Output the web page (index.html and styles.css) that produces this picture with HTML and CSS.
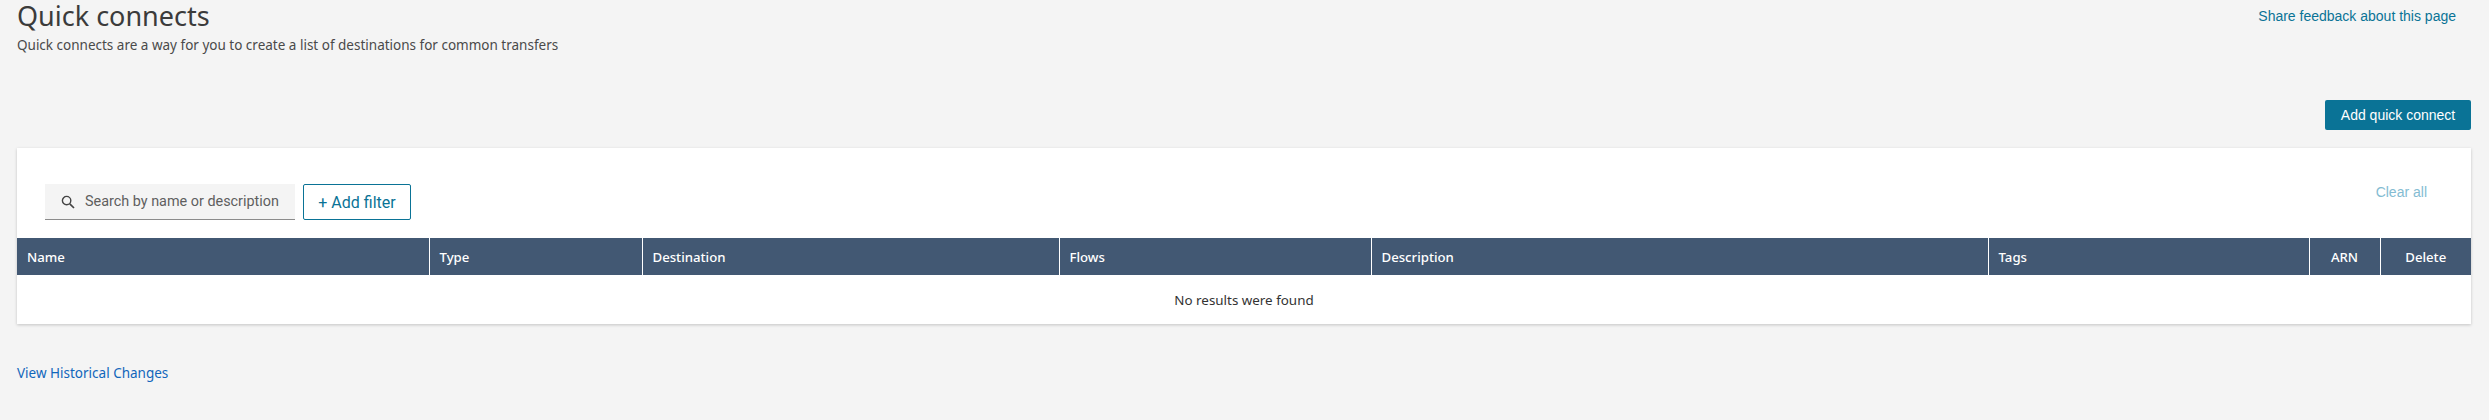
FILE: index.html
```html
<!DOCTYPE html>
<html lang="en">
<head>
    <meta charset="UTF-8">
    <title>Quick connects</title>
    <link rel="stylesheet" href="styles.css">
</head>
<body>
    <div class="page-head">
        <div>
            <h1>Quick connects</h1>
            <p class="subtitle">Quick connects are a way for you to create a list of destinations for common transfers</p>
        </div>
        <a class="feedback" href="#">Share feedback about this page</a>
    </div>

    <div class="actions">
        <button class="primary">Add quick connect</button>
    </div>

    <div class="card">
        <div class="toolbar">
            <div class="search">
                <svg class="search-icon" viewBox="0 0 14 14" width="14" height="14">
                    <circle cx="5.6" cy="5.6" r="4.2" fill="none" stroke="#444" stroke-width="1.4"/>
                    <line x1="8.8" y1="8.8" x2="13" y2="13" stroke="#444" stroke-width="1.7"/>
                </svg>
                <span>Search by name or description</span>
            </div>
            <button class="add-filter">+ Add filter</button>
            <a class="clear-all" href="#">Clear all</a>
        </div>
        <table>
            <colgroup>
                <col class="col-name">
                <col class="col-type">
                <col class="col-destination">
                <col class="col-flows">
                <col class="col-description">
                <col class="col-tags">
                <col class="col-arn">
                <col class="col-delete">
            </colgroup>
            <thead>
                <tr>
                    <th>Name</th>
                    <th>Type</th>
                    <th>Destination</th>
                    <th>Flows</th>
                    <th>Description</th>
                    <th>Tags</th>
                    <th class="center">ARN</th>
                    <th class="center">Delete</th>
                </tr>
            </thead>
            <tbody>
                <tr>
                    <td colspan="8">No results were found</td>
                </tr>
            </tbody>
        </table>
    </div>

    <a class="history" href="#">View Historical Changes</a>
</body>
</html>
```

FILE: styles.css
```css
html, body {
    height: 100%;
}
body {
    margin: 0;
    padding: 0 18px 0 17px;
    background-color: #f4f4f4;
    font-family: "Noto Sans", Arial, sans-serif;
    color: #3b3b3b;
    overflow: hidden;
}
a {
    text-decoration: none;
}
.page-head {
    display: flex;
    justify-content: space-between;
    height: 100px;
}
h1 {
    margin: -2px 0 0;
    font-size: 27px;
    font-weight: 400;
    line-height: 36px;
    color: #3b3b3b;
}
.subtitle {
    margin: 1px 0 0;
    font-size: 13.5px;
    line-height: 20px;
    color: #4a4a4a;
}
.feedback {
    margin: 7px 15px 0 0;
    font-family: "Liberation Sans", Arial, sans-serif;
    font-size: 14px;
    line-height: 18px;
    color: #0a7396;
}
.actions {
    display: flex;
    justify-content: flex-end;
    height: 48px;
}
.primary {
    width: 146px;
    height: 30px;
    border: none;
    border-radius: 2px;
    background-color: #0a7396;
    color: #fff;
    font-family: "Liberation Sans", Arial, sans-serif;
    font-size: 14px;
}
.card {
    background-color: #fff;
    box-shadow: 0 1px 3px rgba(0, 0, 0, 0.2);
}
.toolbar {
    display: flex;
    align-items: flex-start;
    height: 90px;
    padding: 36px 0 0 28px;
    box-sizing: border-box;
}
.search {
    display: flex;
    align-items: center;
    width: 250px;
    height: 36px;
    box-sizing: border-box;
    padding-left: 16px;
    background-color: #f4f4f4;
    border-bottom: 1px solid #8c8c8c;
    font-family: Roboto, Arial, sans-serif;
    font-size: 14.4px;
    color: #5f5f5f;
    white-space: nowrap;
}
.search-icon {
    margin-right: 10px;
}
.add-filter {
    width: 108px;
    height: 36px;
    margin-left: 8px;
    padding: 0;
    background-color: #fff;
    border: 1px solid #0a7396;
    border-radius: 2px;
    color: #0a7396;
    font-family: Roboto, Arial, sans-serif;
    font-size: 16px;
}
.clear-all {
    margin: -2px 0 0 auto;
    padding-right: 44px;
    font-family: "Liberation Sans", Arial, sans-serif;
    font-size: 14px;
    line-height: 20px;
    color: #84bcd2;
}
table {
    width: 100%;
    table-layout: fixed;
    border-collapse: collapse;
}
.col-name { width: 412px; }
.col-type { width: 213px; }
.col-destination { width: 417px; }
.col-flows { width: 312px; }
.col-description { width: 617px; }
.col-tags { width: 321px; }
.col-arn { width: 71px; }
th {
    height: 37px;
    padding: 0 10px;
    background-color: #425873;
    border-left: 1px solid #fff;
    color: #fff;
    font-size: 13.2px;
    font-weight: 500;
    text-align: left;
}
th:first-child {
    border-left: none;
}
th.center {
    text-align: center;
}
td {
    height: 49px;
    padding: 0;
    font-size: 13.4px;
    text-align: center;
    color: #333;
}
.history {
    display: block;
    margin-top: 39px;
    font-size: 13.5px;
    line-height: 20px;
    color: #1166bb;
}
```
